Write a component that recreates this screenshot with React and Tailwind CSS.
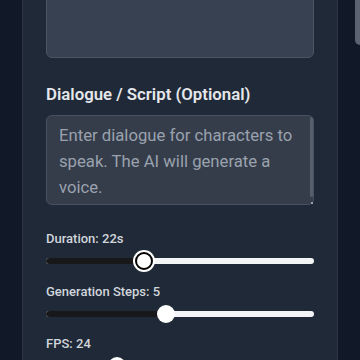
import React, { useState } from 'react';

const SliderRow = ({ label, value, focused, className = '' }) => (
  <div className={className}>
    <p className="text-[13px] font-medium text-gray-300 leading-5">{label}</p>
    <div className="relative mt-px h-[22px] flex items-center">
      <div className="h-[6px] w-full rounded-full bg-[#f3f4f6] overflow-hidden">
        <div className="h-full bg-[#18181b]" style={{ width: `${value}%` }} />
      </div>
      <div
        className={`absolute top-1/2 -translate-x-1/2 -translate-y-1/2 rounded-full bg-white ${
          focused ? 'w-[18px] h-[18px] border-2 border-black ring-2 ring-white' : 'w-[18px] h-[18px]'
        }`}
        style={{ left: `${value}%` }}
      />
    </div>
  </div>
);

export default function App() {
  const [script, setScript] = useState('');

  return (
    <div className="h-[360px] overflow-hidden bg-[#111827] flex font-['Roboto',sans-serif]">
      {/* Settings panel */}
      <div className="ml-[22px] w-[316px] shrink-0 -mt-[60px] bg-[#1f2937] border-x border-[#2b3544] px-[23px]">
        <textarea
          className="block w-full h-[118px] resize-none rounded-md bg-[#374151] border border-[#4b5563] outline-none"
          readOnly
        />

        <h3 className="mt-6 text-[16.8px] leading-6 font-semibold text-gray-200">
          Dialogue / Script (Optional)
        </h3>

        <div className="relative mt-[9px]">
          <textarea
            value={script}
            onChange={(e) => setScript(e.target.value)}
            placeholder="Enter dialogue for characters to speak. The AI will generate a voice."
            className="block w-full h-[90px] resize-none rounded-md bg-[#353d4b] border border-[#465161] px-3 pt-[7px] text-[16.7px] leading-[26px] text-gray-200 placeholder:text-[#9aa2ae] outline-none"
          />
          <div className="absolute right-[1px] top-[2px] w-[3px] h-[80px] rounded-full bg-[#565f6c]" />
          <div className="absolute right-[1px] bottom-[1px] w-[2px] h-[2px] bg-gray-400" />
        </div>

        <SliderRow className="mt-6" label="Duration: 22s" value={36.6} focused />
        <SliderRow className="mt-[10px]" label="Generation Steps: 5" value={44.8} />
        <SliderRow className="mt-[9px]" label="FPS: 24" value={26.5} />
      </div>

      {/* Next column peeking in */}
      <div className="ml-[17px] flex-1">
        <div className="h-[45px] bg-[#5b6371] rounded-bl-md" />
      </div>
    </div>
  );
}
